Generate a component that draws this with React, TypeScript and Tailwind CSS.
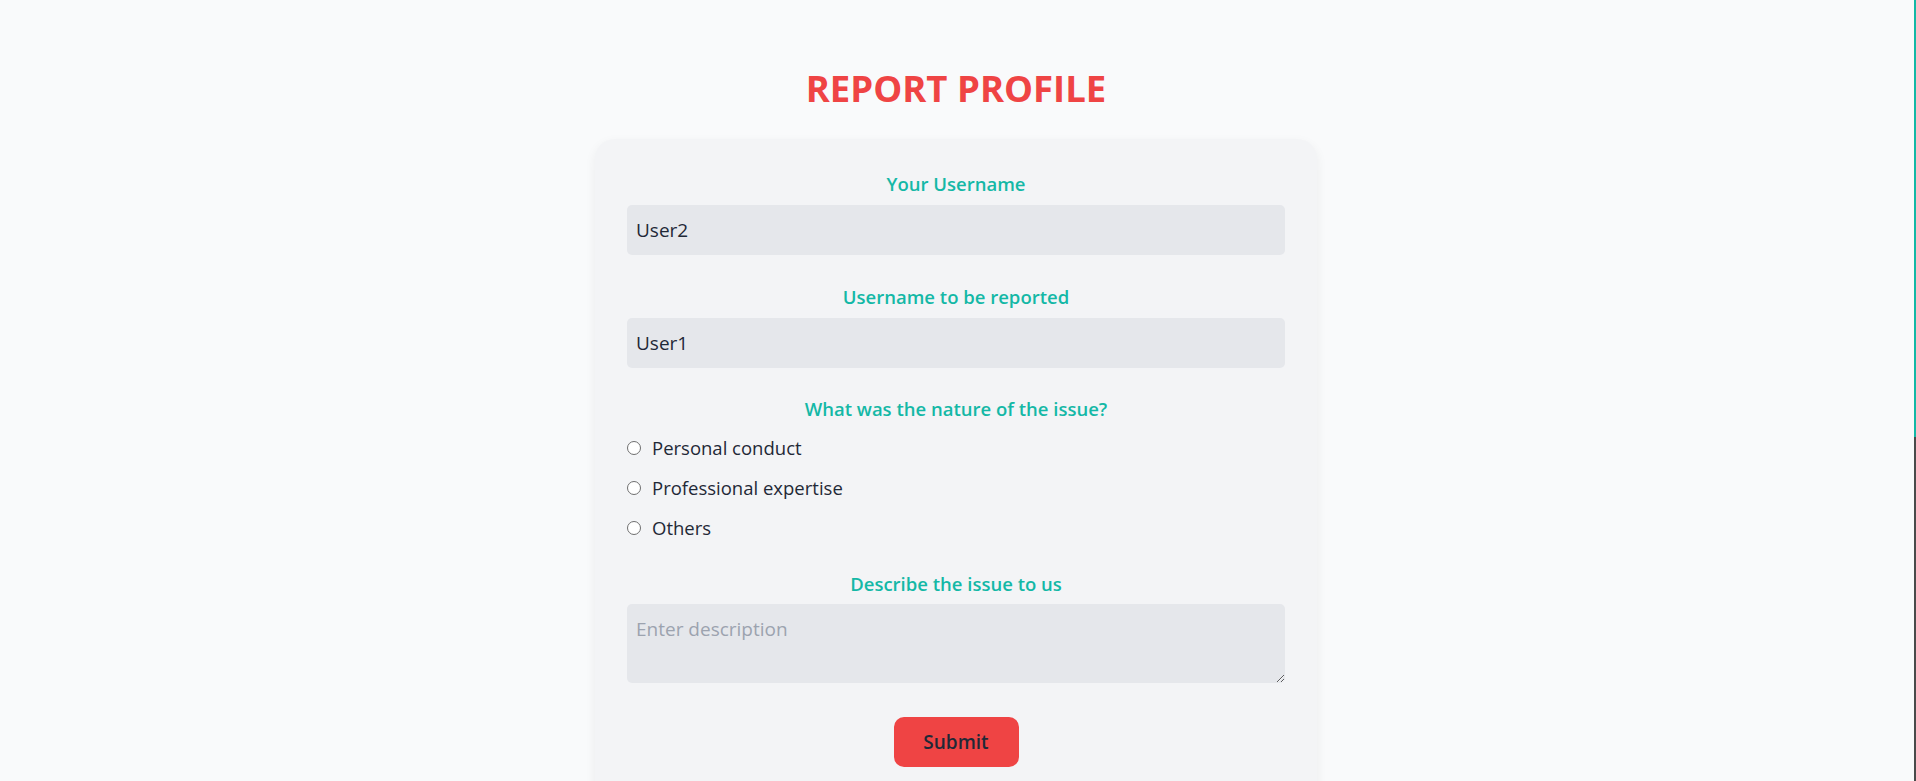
import React from 'react';

const issues = ['Personal conduct', 'Professional expertise', 'Others'];

const App: React.FC = () => {
  return (
    <div className="w-full h-[781px] bg-[#f9fafb] flex overflow-hidden font-['Open_Sans',sans-serif] text-[#1f2937]">
      <div className="flex-1 flex flex-col items-center pt-[66px] pr-[2px]">
        <h1 className="text-[36.5px] leading-[45px] font-bold text-[#ef4444]">REPORT PROFILE</h1>

        {/* Card */}
        <div className="mt-[28px] w-[722px] bg-[#f3f4f6] rounded-[20px] shadow-[0_4px_12px_rgba(0,0,0,0.06)] px-[32px] pt-[31px] pb-[40px]">
          <label className="block text-center text-[18.5px] leading-[28px] font-semibold text-[#14b8a6] mb-[7px]">Your Username</label>
          <input
            readOnly
            value="User2"
            className="w-full h-[50px] rounded-[5px] bg-[#e5e7eb] px-[9px] text-[19px] outline-none"
          />

          <label className="block text-center text-[18.5px] leading-[28px] font-semibold text-[#14b8a6] mt-[28px] mb-[7px]">Username to be reported</label>
          <input
            readOnly
            value="User1"
            className="w-full h-[50px] rounded-[5px] bg-[#e5e7eb] px-[9px] text-[19px] outline-none"
          />

          <label className="block text-center text-[18.5px] leading-[28px] font-semibold text-[#14b8a6] mt-[27px]">What was the nature of the issue?</label>
          <div className="mt-[5px] flex flex-col">
            {issues.map((item) => (
              <label key={item} className="h-[40px] flex items-center gap-[11px] text-[18.5px]">
                <input
                  type="radio"
                  name="issue"
                  className="m-0 w-[14px] h-[14px] appearance-none rounded-full border border-[#6f6f6f] bg-white"
                />
                <span>{item}</span>
              </label>
            ))}
          </div>

          <label className="block text-center text-[18.5px] leading-[28px] font-semibold text-[#14b8a6] mt-[22px] mb-[6px]">Describe the issue to us</label>
          <textarea
            placeholder="Enter description"
            className="block w-full h-[79px] rounded-[5px] bg-[#e5e7eb] px-[9px] py-[11px] text-[19px] leading-[28px] outline-none placeholder:text-[#9ca3af]"
          />

          <div className="flex justify-center mt-[34px]">
            <button className="w-[125px] h-[50px] rounded-[10px] bg-[#ef4444] text-[19px] font-semibold text-[#1f2937]">Submit</button>
          </div>
        </div>
      </div>

      {/* window scrollbar strip */}
      <div className="w-[2px] flex flex-col">
        <div className="h-[437px] bg-[#14b8a6]"></div>
        <div className="flex-1 bg-[#4a4a4a]"></div>
      </div>
    </div>
  );
};

export default App;
